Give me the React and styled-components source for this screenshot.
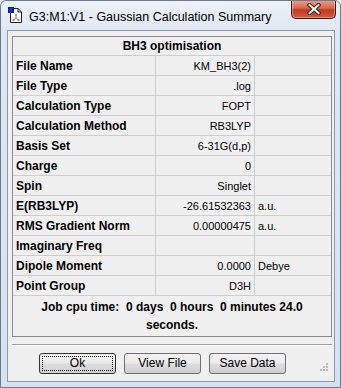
import React from "react";
import styled, { createGlobalStyle } from "styled-components";

const GlobalStyle = createGlobalStyle`
    html, body {
        margin: 0;
        padding: 0;
        background: #ffffff;
    }
`;

const Window = styled.div`
    width: 341px;
    height: 388px;
    box-sizing: border-box;
    display: flex;
    flex-direction: column;
    background: linear-gradient(#edf2f8 0px, #dfe7f2 30px, #d8e2ee 100%);
    border: 1px solid #6b7a8c;
    border-radius: 6px 6px 0 0;
    overflow: hidden;
`;

const TitleBar = styled.div`
    height: 29px;
    display: flex;
    align-items: center;
    padding-left: 7px;
    position: relative;
`;

const TitleText = styled.span`
    margin-left: 6px;
    font-family: "Liberation Sans", Arial, sans-serif;
    font-size: 12.5px;
    color: #000000;
    margin-top: 2px;
`;

const CloseButton = styled.div`
    position: absolute;
    top: -1px;
    right: 4px;
    width: 45px;
    height: 19px;
    box-sizing: border-box;
    border: 1px solid #3c1a16;
    border-top: none;
    border-radius: 0 0 5px 5px;
    background: linear-gradient(#e9a08c 0%, #d8684f 45%, #c23a20 55%, #d45a3c 100%);
    display: flex;
    align-items: center;
    justify-content: center;
    box-shadow: inset 0 0 0 1px rgba(255, 255, 255, 0.35);
`;

const Client = styled.div`
    flex: 1;
    margin: 0 5px 5px 6px;
    border: 1px solid #8a9bb0;
    background: #f0f0f0;
    display: flex;
    flex-direction: column;
    padding: 5px 2px 0 4px;
`;

const Panel = styled.div`
    border: 1px solid #8c8c8c;
    display: flex;
    flex-direction: column;
`;

const Table = styled.div`
    display: grid;
    grid-template-columns: 143px 99px 1fr;
    font-family: "Liberation Sans", Arial, sans-serif;
`;

const Header = styled.div`
    grid-column: 1 / 4;
    height: 18px;
    line-height: 19px;
    text-align: center;
    font-weight: bold;
    font-size: 12px;
    border-bottom: 1px solid #cdcdcd;
`;

const Cell = styled.div`
    height: 19px;
    line-height: 21px;
    overflow: hidden;
    border-bottom: 1px solid #cdcdcd;
    border-right: ${(p) => (p.$last ? "none" : "1px solid #cdcdcd")};
    font-size: ${(p) => (p.$bold ? "12px" : "11px")};
    font-weight: ${(p) => (p.$bold ? "bold" : "normal")};
    text-align: ${(p) => (p.$right ? "right" : "left")};
    padding: ${(p) => (p.$right ? "0 3px 0 0" : "0 0 0 3px")};
    color: #000000;
    white-space: nowrap;
`;

const CpuTime = styled.div`
    font-family: "Liberation Sans", Arial, sans-serif;
    font-weight: bold;
    font-size: 12px;
    line-height: 18px;
    text-align: center;
    padding: 2px 0 2px;
    white-space: pre;
`;

const Separator = styled.div`
    margin: 7px 0 0;
    height: 1px;
    background: #a0a0a0;
    border-bottom: 1px solid #ffffff;
`;

const ButtonRow = styled.div`
    display: flex;
    gap: 8px;
    padding-left: 27px;
    margin-top: 7px;
    position: relative;
`;

const Button = styled.div`
    width: 77px;
    height: 21px;
    box-sizing: border-box;
    border: 1px solid ${(p) => (p.$default ? "#333333" : "#707070")};
    border-radius: 3px;
    background: linear-gradient(#f3f3f3 0%, #ebebeb 48%, #dddddd 52%, #cfcfcf 100%);
    font-family: "Liberation Sans", Arial, sans-serif;
    font-size: 12px;
    display: flex;
    align-items: center;
    justify-content: center;
    position: relative;
    padding-bottom: 1px;
`;

const Focus = styled.div`
    position: absolute;
    inset: 2px;
    border: 1px dotted #000000;
`;

const Grip = styled.div`
    position: absolute;
    right: 3px;
    bottom: -2px;
`;

const rows = [
    ["File Name", "KM_BH3(2)", ""],
    ["File Type", ".log", ""],
    ["Calculation Type", "FOPT", ""],
    ["Calculation Method", "RB3LYP", ""],
    ["Basis Set", "6-31G(d,p)", ""],
    ["Charge", "0", ""],
    ["Spin", "Singlet", ""],
    ["E(RB3LYP)", "-26.61532363", "a.u."],
    ["RMS Gradient Norm", "0.00000475", "a.u."],
    ["Imaginary Freq", "", ""],
    ["Dipole Moment", "0.0000", "Debye"],
    ["Point Group", "D3H", ""],
];

const AppIcon = () => (
    <svg width="15" height="17" viewBox="0 0 15 17">
        <path d="M2.5 1.5 H10 L13.5 5 V15.5 H2.5 Z" fill="#ffffff" stroke="#222222" />
        <path d="M10 1.5 V5 H13.5" fill="none" stroke="#222222" />
        <rect x="0.5" y="0.5" width="5" height="5" fill="#1030e0" stroke="#0a1a80" />
        <path d="M8 8 V11 M8 11 L5.5 13 M8 11 L10.5 13" stroke="#8a8a8a" strokeWidth="1" />
        <circle cx="8" cy="8" r="1.2" fill="#9a9a9a" />
        <circle cx="5.5" cy="13" r="1.2" fill="#9a9a9a" />
        <circle cx="10.5" cy="13" r="1.2" fill="#9a9a9a" />
    </svg>
);

const CloseGlyph = () => (
    <svg width="14" height="12" viewBox="0 0 14 12">
        <path d="M2.5 2 L11.5 10 M11.5 2 L2.5 10" stroke="#4a1e18" strokeWidth="4" strokeLinecap="square" />
        <path d="M2.5 2 L11.5 10 M11.5 2 L2.5 10" stroke="#ffffff" strokeWidth="2" strokeLinecap="square" />
    </svg>
);

const GripIcon = () => (
    <svg width="11" height="11" viewBox="0 0 11 11">
        {[
            [8, 0],
            [8, 3],
            [5, 3],
            [8, 6],
            [5, 6],
            [2, 6],
        ].map(([x, y], i) => (
            <rect key={i} x={x} y={y + 2} width="2" height="2" fill="#b8b8b8" />
        ))}
    </svg>
);

const App = () => {
    return (
        <>
            <GlobalStyle />
            <Window>
                <TitleBar>
                    <AppIcon />
                    <TitleText>G3:M1:V1 - Gaussian Calculation Summary</TitleText>
                    <CloseButton>
                        <CloseGlyph />
                    </CloseButton>
                </TitleBar>
                <Client>
                    <Panel>
                        <Table>
                            <Header>BH3 optimisation</Header>
                            {rows.map(([label, value, unit]) => (
                                <React.Fragment key={label}>
                                    <Cell $bold>{label}</Cell>
                                    <Cell $right>{value}</Cell>
                                    <Cell $last>{unit}</Cell>
                                </React.Fragment>
                            ))}
                        </Table>
                        <CpuTime>
                            {"Job cpu time:  0 days  0 hours  0 minutes 24.0\nseconds."}
                        </CpuTime>
                    </Panel>
                    <Separator />
                    <ButtonRow>
                        <Button $default>
                            Ok
                            <Focus />
                        </Button>
                        <Button>View File</Button>
                        <Button>Save Data</Button>
                        <Grip>
                            <GripIcon />
                        </Grip>
                    </ButtonRow>
                </Client>
            </Window>
        </>
    );
};

export default App;
